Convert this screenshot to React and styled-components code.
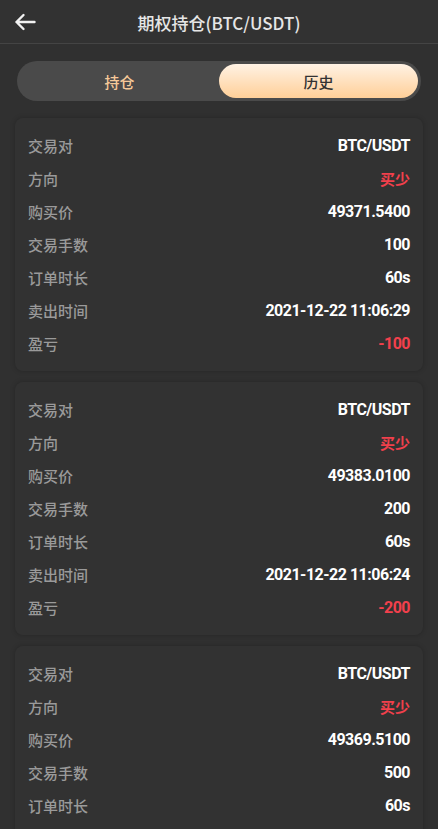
import React from "react";
import styled, { createGlobalStyle } from "styled-components";

const Global = createGlobalStyle`
  html, body { margin: 0; padding: 0; background: #303030; }
  body { font-family: "Noto Sans CJK SC", "Noto Sans", sans-serif; }
  * { box-sizing: border-box; }
`;

const Page = styled.div`
  width: 438px;
  min-height: 829px;
  background: #303030;
`;

const Header = styled.header`
  height: 44px;
  display: grid;
  grid-template-columns: 44px 1fr 44px;
  align-items: center;
  border-bottom: 1px solid #444;
  background: #323232;
`;

const BackButton = styled.button`
  border: 0;
  background: none;
  padding: 0 0 0 14px;
  height: 44px;
  display: flex;
  align-items: center;
  color: #f2f2f2;
  cursor: pointer;
`;

const Title = styled.h1`
  margin: 0;
  text-align: center;
  font-size: 17px;
  font-weight: 500;
  color: #e6e6e6;
  font-family: "Noto Sans CJK SC", "Noto Sans", sans-serif;
`;

const Body = styled.main`
  padding: 17px 15px 0;
  display: flex;
  flex-direction: column;
`;

const Tabs = styled.div`
  height: 40px;
  margin: 0 2px 17px;
  border-radius: 20px;
  background: #4a4a4a;
  display: grid;
  grid-template-columns: 1fr 1fr;
  padding: 3px;
`;

const Tab = styled.div`
  display: flex;
  align-items: center;
  justify-content: center;
  border-radius: 17px;
  font-size: 15px;
  font-weight: 500;
  color: ${(p) => (p.$active ? "#333" : "#f6c999")};
  background: ${(p) =>
    p.$active ? "linear-gradient(180deg, #fff2e4 0%, #ffcf98 100%)" : "transparent"};
`;

const CardList = styled.div`
  display: flex;
  flex-direction: column;
  gap: 11px;
`;

const Card = styled.section`
  background: #323232;
  border-radius: 8px;
  padding: 11px 13px;
  box-shadow: 0 0 5px rgba(0, 0, 0, 0.22);
`;

const Row = styled.div`
  height: 33px;
  display: flex;
  align-items: center;
  justify-content: space-between;
`;

const Label = styled.span`
  font-size: 15px;
  color: #9a9a9a;
  font-weight: 500;
`;

const Value = styled.span`
  font-family: Roboto, "Noto Sans CJK SC", sans-serif;
  font-size: 16px;
  font-weight: 700;
  letter-spacing: -0.5px;
  color: ${(p) => (p.$red ? "#f2404c" : "#ffffff")};
`;

const RedCJK = styled(Value)`
  font-family: "Noto Sans CJK SC", sans-serif;
  font-size: 15px;
  letter-spacing: 0;
`;

const orders = [
  { price: "49371.5400", qty: "100", time: "2021-12-22 11:06:29", pl: "-100" },
  { price: "49383.0100", qty: "200", time: "2021-12-22 11:06:24", pl: "-200" },
  { price: "49369.5100", qty: "500", time: "2021-12-22 11:06:19", pl: "-500" },
];

function ArrowLeft() {
  return (
    <svg width="22" height="18" viewBox="0 0 22 18" fill="none">
      <path
        d="M20.5 9H2.5M9.5 2L2.5 9l7 7"
        stroke="currentColor"
        strokeWidth="2.4"
        strokeLinecap="round"
        strokeLinejoin="round"
      />
    </svg>
  );
}

export default function App() {
  return (
    <Page>
      <Global />
      <Header>
        <BackButton aria-label="back">
          <ArrowLeft />
        </BackButton>
        <Title>期权持仓(BTC/USDT)</Title>
        <span />
      </Header>
      <Body>
        <Tabs>
          <Tab>持仓</Tab>
          <Tab $active>历史</Tab>
        </Tabs>
        <CardList>
          {orders.map((o, i) => (
            <Card key={i}>
              <Row>
                <Label>交易对</Label>
                <Value>BTC/USDT</Value>
              </Row>
              <Row>
                <Label>方向</Label>
                <RedCJK $red>买少</RedCJK>
              </Row>
              <Row>
                <Label>购买价</Label>
                <Value>{o.price}</Value>
              </Row>
              <Row>
                <Label>交易手数</Label>
                <Value>{o.qty}</Value>
              </Row>
              <Row>
                <Label>订单时长</Label>
                <Value>60s</Value>
              </Row>
              <Row>
                <Label>卖出时间</Label>
                <Value>{o.time}</Value>
              </Row>
              <Row>
                <Label>盈亏</Label>
                <Value $red>{o.pl}</Value>
              </Row>
            </Card>
          ))}
        </CardList>
      </Body>
    </Page>
  );
}
